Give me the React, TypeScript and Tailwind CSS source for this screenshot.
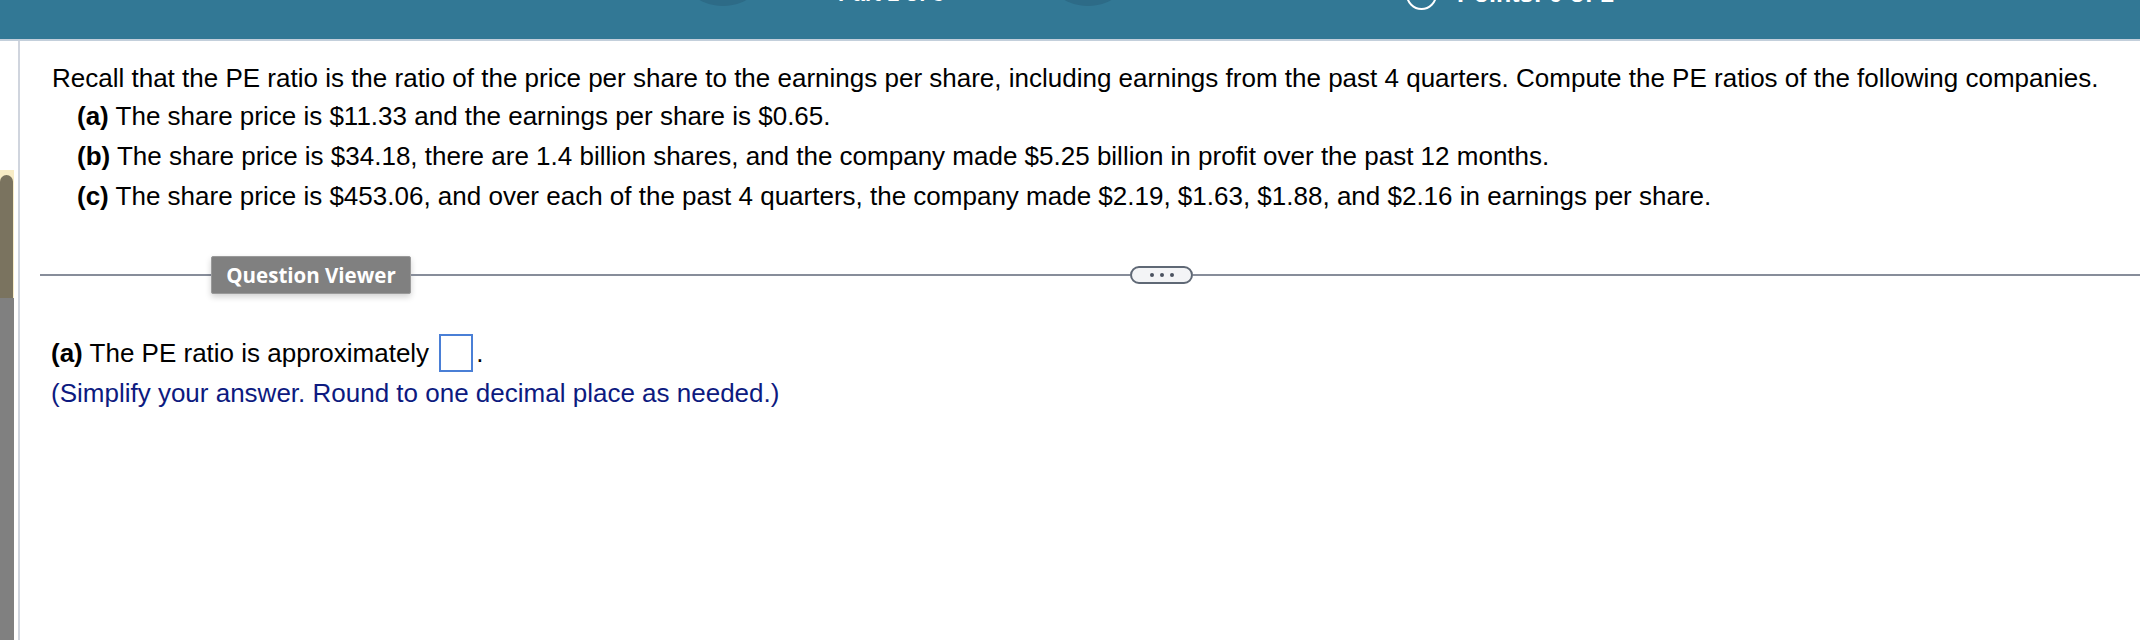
export default function App() {
  return (
    <div className="w-[2140px] h-[640px] bg-white overflow-hidden flex flex-col font-['Liberation_Sans',Arial,sans-serif]">
      {/* header bar, scrolled mostly out of view */}
      <div className="h-[41px] shrink-0 bg-[#327895] border-b-2 border-[#c3cfdb] overflow-hidden flex items-start pl-[674px] text-white font-bold whitespace-nowrap">
        <div className="w-[98px] h-[98px] -mt-[92px] rounded-full bg-[#2d6b87] shrink-0" />
        <span className="ml-[66px] w-[109px] text-[22px] leading-none -mt-[17px]">Part 1 of 3</span>
        <div className="ml-[92px] w-[98px] h-[98px] -mt-[92px] rounded-full bg-[#2d6b87] shrink-0" />
        <div className="ml-[269px] w-[31px] h-[31px] -mt-[21px] rounded-full border-2 border-white shrink-0" />
        <span className="ml-[20px] text-[25px] leading-none -mt-[19px]">Points: 0 of 1</span>
      </div>

      <div className="flex-1 flex">
        {/* left scroll strip */}
        <div className="w-[14px] shrink-0 flex flex-col">
          <div className="h-[129px]" />
          <div className="h-[128px] bg-[#f8ecc6] pt-[5px] pr-[1px]">
            <div className="h-full bg-[#7a735f] rounded-t-full" />
          </div>
          <div className="flex-1 bg-[#808080]" />
        </div>
        <div className="w-[4px] shrink-0" />
        <div className="w-[2px] shrink-0 bg-[#d0d5de]" />

        <div className="flex-1 flex flex-col">
          {/* problem statement */}
          <div className="pl-[32px] pt-[17px] text-[26px] text-black">
            <p className="leading-[40px]">
              Recall that the PE ratio is the ratio of the price per share to the earnings per share, including earnings from the past 4 quarters. Compute the PE ratios of the following companies.
            </p>
            <ul className="pl-[25px] -mt-[2px] leading-[40px]">
              <li>
                <b>(a)</b> The share price is $11.33 and the earnings per share is $0.65.
              </li>
              <li>
                <b>(b)</b> The share price is $34.18, there are 1.4 billion shares, and the company made $5.25 billion in profit over the past 12 months.
              </li>
              <li>
                <b>(c)</b> The share price is $453.06, and over each of the past 4 quarters, the company made $2.19, $1.63, $1.88, and $2.16 in earnings per share.
              </li>
            </ul>
          </div>

          {/* separator with question viewer */}
          <div className="mt-[40px] h-[38px] flex items-center pl-[20px]">
            <div className="w-[171px] h-[2px] bg-[#878d9a]" />
            <button className="w-[200px] h-[38px] shrink-0 bg-[#808080] border border-[#9a9a9a] rounded-[2px] shadow-[0_3px_6px_rgba(0,0,0,0.18)] text-white font-['Open_Sans',sans-serif] font-bold text-[20.5px] leading-none">
              Question Viewer
            </button>
            <div className="w-[719px] h-[2px] bg-[#878d9a]" />
            <div className="w-[63px] h-[18px] shrink-0 rounded-full border-2 border-[#5f6875] bg-[#f3f4f6] flex items-center justify-center gap-[6px]">
              <span className="w-[4px] h-[4px] rounded-full bg-[#4b5260]" />
              <span className="w-[4px] h-[4px] rounded-full bg-[#4b5260]" />
              <span className="w-[4px] h-[4px] rounded-full bg-[#4b5260]" />
            </div>
            <div className="flex-1 h-[2px] bg-[#878d9a]" />
          </div>

          {/* answer */}
          <div className="mt-[39px] pl-[31px] text-[26px]">
            <div className="leading-[40px] flex items-center text-black">
              <span>
                <b>(a)</b> The PE ratio is approximately
              </span>
              <span className="ml-[10px] w-[34px] h-[38px] border-2 border-[#4a7fd6] inline-block" />
              <span className="ml-[3px]">.</span>
            </div>
            <div className="leading-[40px] text-[#0d1a80]">
              (Simplify your answer. Round to one decimal place as needed.)
            </div>
          </div>
        </div>
      </div>
    </div>
  );
}
